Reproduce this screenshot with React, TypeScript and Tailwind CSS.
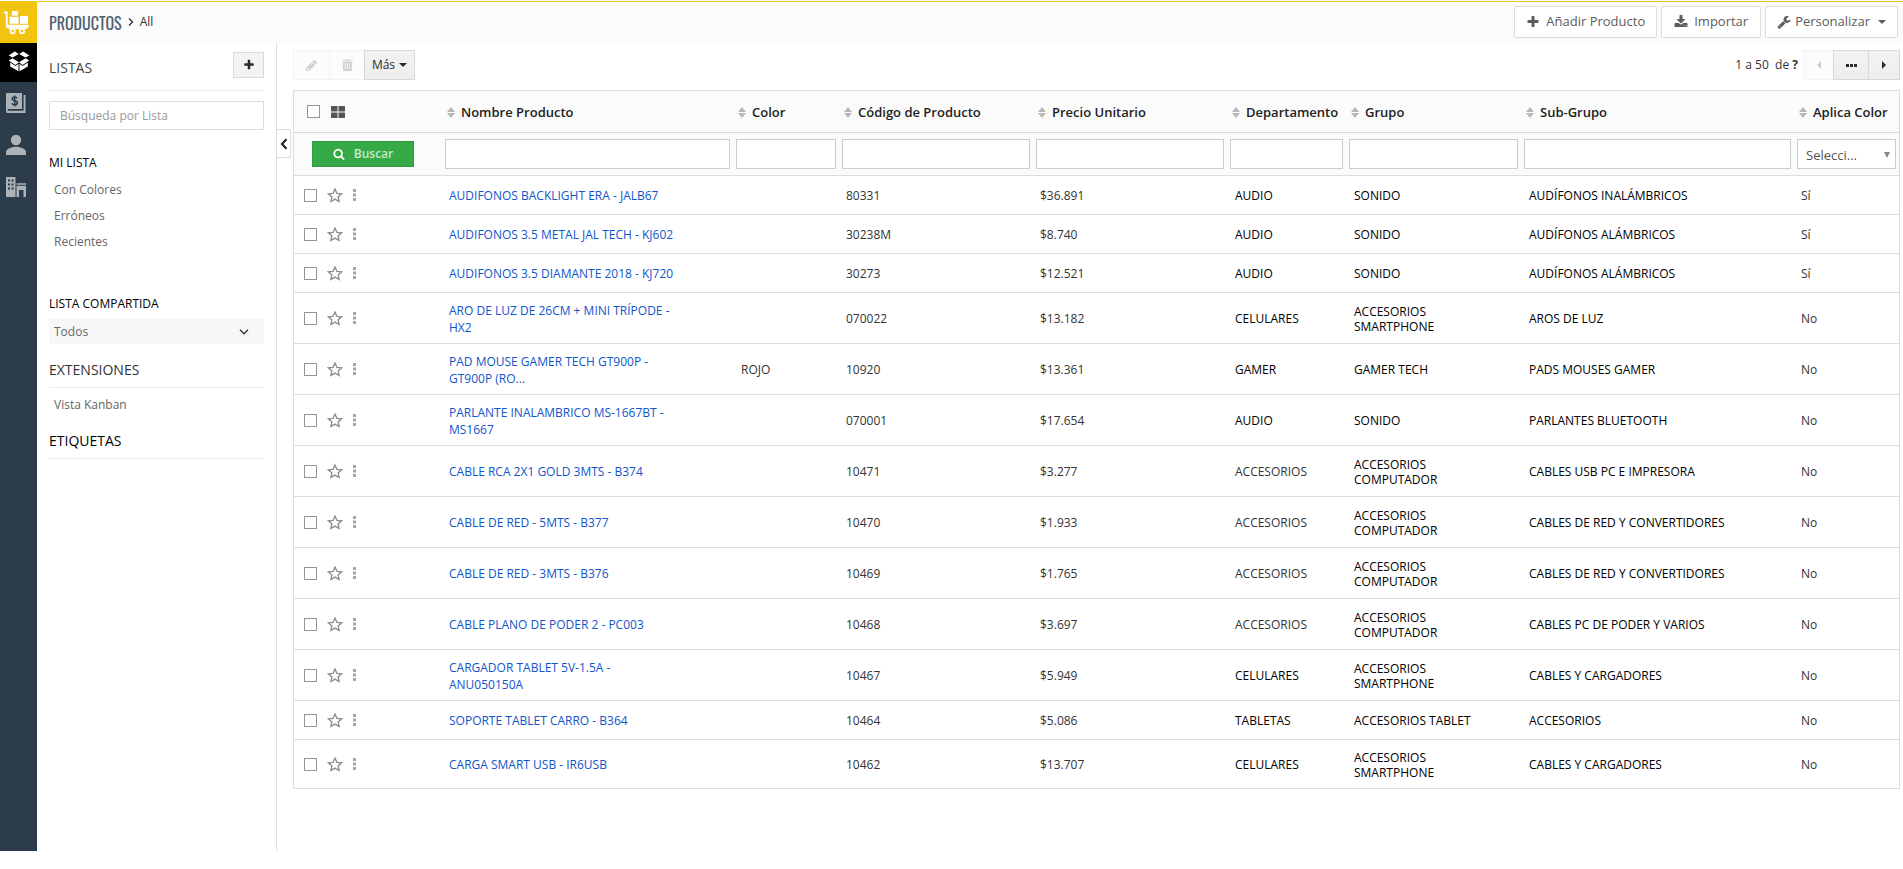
import React from "react";

type Product = {
  name: string;
  color?: string;
  code: string;
  price: string;
  dept: string;
  group: string;
  sub: string;
  applies: string;
  size: "single" | "double" | "last";
};

const products: Product[] = [
  { name: "AUDIFONOS BACKLIGHT ERA - JALB67", code: "80331", price: "$36.891", dept: "AUDIO", group: "SONIDO", sub: "AUDÍFONOS INALÁMBRICOS", applies: "Sí", size: "single" },
  { name: "AUDIFONOS 3.5 METAL JAL TECH - KJ602", code: "30238M", price: "$8.740", dept: "AUDIO", group: "SONIDO", sub: "AUDÍFONOS ALÁMBRICOS", applies: "Sí", size: "single" },
  { name: "AUDIFONOS 3.5 DIAMANTE 2018 - KJ720", code: "30273", price: "$12.521", dept: "AUDIO", group: "SONIDO", sub: "AUDÍFONOS ALÁMBRICOS", applies: "Sí", size: "single" },
  { name: "ARO DE LUZ DE 26CM + MINI TRÍPODE - HX2", code: "070022", price: "$13.182", dept: "CELULARES", group: "ACCESORIOS SMARTPHONE", sub: "AROS DE LUZ", applies: "No", size: "double" },
  { name: "PAD MOUSE GAMER TECH GT900P - GT900P (RO...", color: "ROJO", code: "10920", price: "$13.361", dept: "GAMER", group: "GAMER TECH", sub: "PADS MOUSES GAMER", applies: "No", size: "double" },
  { name: "PARLANTE INALAMBRICO MS-1667BT - MS1667", code: "070001", price: "$17.654", dept: "AUDIO", group: "SONIDO", sub: "PARLANTES BLUETOOTH", applies: "No", size: "double" },
  { name: "CABLE RCA 2X1 GOLD 3MTS - B374", code: "10471", price: "$3.277", dept: "ACCESORIOS", group: "ACCESORIOS COMPUTADOR", sub: "CABLES USB PC E IMPRESORA", applies: "No", size: "double" },
  { name: "CABLE DE RED - 5MTS - B377", code: "10470", price: "$1.933", dept: "ACCESORIOS", group: "ACCESORIOS COMPUTADOR", sub: "CABLES DE RED Y CONVERTIDORES", applies: "No", size: "double" },
  { name: "CABLE DE RED - 3MTS - B376", code: "10469", price: "$1.765", dept: "ACCESORIOS", group: "ACCESORIOS COMPUTADOR", sub: "CABLES DE RED Y CONVERTIDORES", applies: "No", size: "double" },
  { name: "CABLE PLANO DE PODER 2 - PC003", code: "10468", price: "$3.697", dept: "ACCESORIOS", group: "ACCESORIOS COMPUTADOR", sub: "CABLES PC DE PODER Y VARIOS", applies: "No", size: "double" },
  { name: "CARGADOR TABLET 5V-1.5A - ANU050150A", code: "10467", price: "$5.949", dept: "CELULARES", group: "ACCESORIOS SMARTPHONE", sub: "CABLES Y CARGADORES", applies: "No", size: "double" },
  { name: "SOPORTE TABLET CARRO - B364", code: "10464", price: "$5.086", dept: "TABLETAS", group: "ACCESORIOS TABLET", sub: "ACCESORIOS", applies: "No", size: "single" },
  { name: "CARGA SMART USB - IR6USB", code: "10462", price: "$13.707", dept: "CELULARES", group: "ACCESORIOS SMARTPHONE", sub: "CABLES Y CARGADORES", applies: "No", size: "last" },
];

const rowHeight = { single: "h-[39px]", double: "h-[51px]", last: "h-[49px]" };

const columns = ["Nombre Producto", "Color", "Código de Producto", "Precio Unitario", "Departamento", "Grupo", "Sub-Grupo", "Aplica Color"];

const paths = {
  plus: "M1600 736v192q0 40-28 68t-68 28h-416v416q0 40-28 68t-68 28h-192q-40 0-68-28t-28-68v-416h-416q-40 0-68-28t-28-68v-192q0-40 28-68t68-28h416v-416q0-40 28-68t68-28h192q40 0 68 28t28 68v416h416q40 0 68 28t28 68z",
  download: "M1344 1344q0-26-19-45t-45-19-45 19-19 45 19 45 45 19 45-19 19-45zm256 0q0-26-19-45t-45-19-45 19-19 45 19 45 45 19 45-19 19-45zm128-224v320q0 40-28 68t-68 28h-1472q-40 0-68-28t-28-68v-320q0-40 28-68t68-28h465l135 136q58 56 136 56t136-56l136-136h464q40 0 68 28t28 68zm-325-569q17 41-14 70l-448 448q-18 19-45 19t-45-19l-448-448q-31-29-14-70 17-39 59-39h256v-448q0-26 19-45t45-19h256q26 0 45 19t19 45v448h256q42 0 59 39z",
  wrench: "M448 1472q0-26-19-45t-45-19-45 19-19 45 19 45 45 19 45-19 19-45zm644-420l-682 682q-37 37-90 37-52 0-91-37l-106-108q-38-36-38-90 0-53 38-91l681-681q39 98 114.5 173.5t173.5 114.5zm634-435q0 39-23 106-47 134-164.5 217.5t-258.5 83.5q-185 0-316.5-131.5t-131.5-316.5 131.5-316.5 316.5-131.5q58 0 121.5 16.5t107.5 46.5q16 11 16 28t-16 28l-293 169v224l193 107q5-3 79-48.5t135.5-81 70.5-35.5q15 0 23.5 10t8.5 25z",
  search: "M1216 832q0-185-131.5-316.5t-316.5-131.5-316.5 131.5-131.5 316.5 131.5 316.5 316.5 131.5 316.5-131.5 131.5-316.5zm512 832q0 52-38 90t-90 38q-54 0-90-38l-343-342q-179 124-399 124-143 0-273.5-55.5t-225-150-150-225-55.5-273.5 55.5-273.5 150-225 225-150 273.5-55.5 273.5 55.5 225 150 150 225 55.5 273.5q0 220-124 399l343 343q37 37 37 90z",
  pencil: "M491 1536l91-91-235-235-91 91v107h128v128h107zm523-928q0-22-22-22-10 0-17 7l-542 542q-7 7-7 17 0 22 22 22 10 0 17-7l542-542q7-7 7-17zm-54-192l416 416-832 832h-416v-416zm683 96q0 53-37 90l-166 166-416-416 166-165q36-38 90-38 53 0 91 38l235 234q37 39 37 91z",
};

function Glyph({ name, className }: { name: keyof typeof paths; className: string }) {
  return (
    <svg viewBox="0 0 1792 1792" fill="currentColor" className={className} aria-hidden="true">
      <path d={paths[name]} />
    </svg>
  );
}

function Caret() {
  return (
    <svg viewBox="0 0 8 4" width="8" height="4" fill="currentColor" aria-hidden="true">
      <path d="M0 0h8L4 4z" />
    </svg>
  );
}

function SortIcon() {
  return (
    <svg viewBox="0 0 8 11" width="8" height="11" fill="#b8b8b8" className="shrink-0" aria-hidden="true">
      <path d="M0 5 4 0l4 5zM0 6h8l-4 5z" />
    </svg>
  );
}

function TrashIcon() {
  return (
    <svg viewBox="0 0 11 12" width="11" height="12" className="shrink-0" aria-hidden="true">
      <path fill="currentColor" fillRule="evenodd" d="M3.2 1.6 4 0h3l.8 1.6H11v1H0v-1zM4.2 1.6h2.6L6.5.9h-2zM1 3h9v8q0 1-1 1H2q-1 0-1-1zM2.7 4.3v6h.9v-6zM5 4.3v6h.9v-6zM7.4 4.3v6h.9v-6z" />
    </svg>
  );
}

function Star() {
  return (
    <svg viewBox="0 0 16 16" width="16" height="16" fill="none" stroke="#8b8b8b" strokeWidth="1.3" strokeLinejoin="miter" aria-hidden="true">
      <path d="M8 2l1.9 4.3 4.7.5-3.5 3.1 1 4.6L8 12.1l-4.1 2.4 1-4.6-3.500-3.100 4.700-.5z" />
    </svg>
  );
}

function TrolleyIcon() {
  return (
    <svg viewBox="0 0 26 26" width="26" height="26" fill="#fff" aria-hidden="true">
      <path d="M0 1.6h3.6v13.2H24.6v3H1.8V3.6H0z" />
      <rect x="7.8" y="1" width="6.2" height="4.6" />
      <rect x="5.6" y="6.8" width="9" height="7" />
      <rect x="16" y="6" width="8" height="7.8" />
      <path d="M4.5 17.6h18v1.6h-18z" />
      <g fill="#f1c40f" stroke="#fff" strokeWidth="1.7">
        <circle cx="8.6" cy="21.2" r="2.2" />
        <circle cx="18" cy="21.2" r="2.2" />
      </g>
    </svg>
  );
}

function BoxIcon() {
  return (
    <svg viewBox="0 0 22 21" width="22" height="21" fill="#fff" aria-hidden="true">
      <path d="M0.6 4.4 6.8 0.6 10.8 3 4.6 6.6z" />
      <path d="M21.4 4.4 15.2 0.6 11.2 3l6.2 3.6z" />
      <path d="M4.4 7.2 11 11.2l-3.6 2.7L0.8 9.6z" />
      <path d="M17.6 7.2 11 11.2l3.6 2.7 6.6-4.3z" />
      <path d="M2.2 11.6l5.2 3.4 3.1-2.2v7.4L2.2 15.6z" />
      <path d="M19.8 11.6 14.6 15l-3.1-2.2v7.4l8.3-4.6z" />
    </svg>
  );
}

function DollarBookIcon() {
  return (
    <svg viewBox="0 0 22 22" width="22" height="22" aria-hidden="true">
      <path fill="#abb2b8" d="M2 1h15v16H3.4q-.9 0-.9.9 0 .9.9.9H18.6V3H20.5V21H2.5Q1 21 1 19V2q0-1 1-1z" />
      <path fill="none" stroke="#2c3b49" strokeWidth="1.5" d="M12.2 6.2Q11.500 5 9.700 5 7.200 5 7.200 6.800 7.200 8.300 9.600 8.700 12.300 9.100 12.300 10.900 12.300 12.700 9.700 12.700 7.400 12.700 6.900 11.300M9.700 3.500V14.200" />
    </svg>
  );
}

function PersonIcon() {
  return (
    <svg viewBox="0 0 22 22" width="22" height="22" fill="#abb2b8" aria-hidden="true">
      <circle cx="11" cy="6" r="5.200" />
      <path d="M1 21v-2.500c0-3.500 5-5.700 10-5.700s10 2.200 10 5.700V21z" />
    </svg>
  );
}

function BuildingIcon() {
  return (
    <svg viewBox="0 0 22 22" width="22" height="22" fill="#abb2b8" aria-hidden="true">
      <path fillRule="evenodd" d="M1 1h9.500v20H1zM3 3.500V5.500h2V3.500zM6.500 3.500V5.500h2V3.500zM3 7.500V9.500h2V7.500zM6.500 7.500V9.500h2V7.500zM3 11.500V13.500h2V11.500zM6.500 11.500V13.500h2V11.500z" />
      <path d="M11.500 7.200h9.500v1.600h-9.500zM11.500 9.800h9.500V21h-2.500v-7h-4.500v7h-2.500z" />
    </svg>
  );
}

function Checkbox({ label }: { label: string }) {
  return <input type="checkbox" aria-label={label} className="size-[13px] shrink-0 appearance-none border border-[#959595] bg-white" />;
}

const topButton = "flex h-8 items-center rounded-xs border border-[#dcdcdc] bg-white text-[13px] text-[#5c5c5c]";
const greyButton = "flex h-[30px] items-center justify-center border border-[#d8d8d8] bg-linear-to-b from-[#f2f2f2] to-[#eeeeee] text-[#2b2b2b]";
const navItem = "flex h-[42px] items-center justify-center pr-[5px]";
const listLink = "block px-[5px] text-xs leading-[26px] text-[#666]";
const sectionTitle = "text-sm leading-5";

function SidePanel() {
  return (
    <aside className="w-[240px] shrink-0 border-r border-[#dcdcdc] px-3">
      <div className="flex h-12 items-center justify-between border-b border-[#ebebeb] pb-[3px]">
        <h2 className={`${sectionTitle} pt-[5px] text-[#444]`}>LISTAS</h2>
        <button type="button" aria-label="Añadir lista" className="flex h-[26px] w-[31px] items-center justify-center border border-[#dadada] bg-[#f3f3f3] text-[#2b2b2b]">
          <Glyph name="plus" className="size-3" />
        </button>
      </div>
      <input aria-label="Búsqueda por Lista" placeholder="Búsqueda por Lista" className="mt-[10px] h-[29px] w-full border border-[#dcdcdc] px-[10px] text-xs placeholder:text-[#999]" />
      <h3 className="mt-[23px] text-xs leading-5 text-black">MI LISTA</h3>
      <nav className="mt-1">
        <a href="#colores" className={listLink}>Con Colores</a>
        <a href="#erroneos" className={listLink}>Erróneos</a>
        <a href="#recientes" className={listLink}>Recientes</a>
      </nav>
      <h3 className="mt-[39px] text-xs leading-5 text-black">LISTA COMPARTIDA</h3>
      <button type="button" className="mt-[5px] flex h-[25px] w-full items-center justify-between bg-[#f7f7f7] pl-[5px] pr-[15px] text-xs text-[#666]">
        Todos
        <svg viewBox="0 0 10 6" width="10" height="6" fill="none" stroke="#333" strokeWidth="1.4" aria-hidden="true"><path d="M1 .8l4 4 4-4" /></svg>
      </button>
      <h2 className={`${sectionTitle} mt-4 border-b border-[#ebebeb] pb-[7px] text-[#333]`}>EXTENSIONES</h2>
      <a href="#kanban" className={`${listLink} mt-1`}>Vista Kanban</a>
      <h2 className={`${sectionTitle} mt-[13px] border-b border-[#ebebeb] pb-[7px] text-black`}>ETIQUETAS</h2>
    </aside>
  );
}

function ProductTable() {
  return (
    <table className="w-full table-fixed border-separate border-spacing-0 border-l border-r border-t border-[#dcdcdc] text-xs text-[#333]">
      <colgroup>
        <col className="w-[148px]" />
        <col />
        <col className="w-[106px]" />
        <col className="w-[194px]" />
        <col className="w-[194px]" />
        <col className="w-[119px]" />
        <col className="w-[175px]" />
        <col className="w-[273px]" />
        <col className="w-[105px]" />
      </colgroup>
      <thead className="bg-[#fbfbfb]">
        <tr className="h-[42px]">
          <th className="border-b border-[#dcdcdc] p-0 pl-[13px]">
            <div className="flex items-center gap-[11px]">
              <Checkbox label="Seleccionar todo" />
              <svg viewBox="0 0 14 12" width="14" height="12" fill="#555" aria-hidden="true">
                <path d="M0 0h6.500v5.500H0zM7.500 0H14v5.500H7.500zM0 6.500h6.500V12H0zM7.500 6.500H14V12H7.500z" />
              </svg>
            </div>
          </th>
          {columns.map((c) => (
            <th key={c} scope="col" className="border-b border-[#dcdcdc] p-0 pl-[5px] pt-[3px] text-left text-[13px] font-semibold text-[#222]">
              <div className="flex items-center gap-[6px] whitespace-nowrap">
                <SortIcon />
                {c}
              </div>
            </th>
          ))}
        </tr>
        <tr className="h-[43px]">
          <td className="border-b border-[#dcdcdc] p-0 pl-[18px]">
            <button type="button" className="flex h-[26px] w-[102px] items-center justify-center gap-[9px] border border-[#2f9a41] bg-[#35aa47] font-semibold text-[#c6ebcc]">
              <Glyph name="search" className="size-3 text-white" />
              Buscar
            </button>
          </td>
          {columns.slice(0, 7).map((c) => (
            <td key={c} className="border-b border-[#dcdcdc] px-[3px] py-0">
              <input aria-label={`Filtrar por ${c}`} className="block h-[30px] w-full border border-[#ccc] bg-white px-2" />
            </td>
          ))}
          <td className="border-b border-[#dcdcdc] px-[3px] py-0">
            <div className="relative">
              <select aria-label="Filtrar por Aplica Color" className="block h-[30px] w-full appearance-none border border-[#ccc] bg-white pl-2 pt-[3px] text-[13px] text-[#555]">
                <option>Selecci...</option>
              </select>
              <svg viewBox="0 0 6 6" width="6" height="6" fill="#888" className="pointer-events-none absolute right-[6px] top-[13px]" aria-hidden="true"><path d="M0 0h6L3 6z" /></svg>
            </div>
          </td>
        </tr>
      </thead>
      <tbody>
        {products.map((p) => (
          <tr key={p.code} className={`${rowHeight[p.size]} [&>td]:border-b [&>td]:border-[#dcdcdc] [&>td]:pb-0 [&>td]:pr-0`}>
            <td className="pl-[10px]">
              <div className="flex items-center gap-[10px]">
                <Checkbox label={`Seleccionar ${p.name}`} />
                <button type="button" aria-label="Favorito"><Star /></button>
                <button type="button" aria-label="Acciones">
                  <svg viewBox="0 0 3 12" width="3" height="12" fill="#a5a5a5" aria-hidden="true"><path d="M0 0h3v3H0zM0 4.500h3v3H0zM0 9h3v3H0z" /></svg>
                </button>
              </div>
            </td>
            <td className="pl-[7px] pt-px">
              <a href={`#${p.code}`} className="block max-w-[230px] leading-[17px] text-[#1155cc]">{p.name}</a>
            </td>
            <td className="pl-2 pt-[2px]">{p.color}</td>
            <td className="pl-[7px] pt-[2px]">{p.code}</td>
            <td className="pl-[7px] pt-[2px]">{p.price}</td>
            <td className={p.dept === "ACCESORIOS" ? "pl-2 pt-px text-[#333]" : "pl-2 pt-px text-black"}>{p.dept}</td>
            <td className="pl-2 pt-px text-black">
              <div className="max-w-[140px] leading-[15px]">{p.group}</div>
            </td>
            <td className="pl-2 pt-px text-black">{p.sub}</td>
            <td className="pl-[7px] pt-[2px]">{p.applies}</td>
          </tr>
        ))}
      </tbody>
    </table>
  );
}

export default function App() {
  return (
    <div className="bg-white pt-px font-['Open_Sans',sans-serif]">
      <div className="flex min-h-[calc(100vh-19px)] border-t border-[#f1c40f]">
        <nav className="w-[37px] shrink-0 bg-[#2c3b49]" aria-label="Módulos">
          <a href="#inventario" aria-label="Inventario" className="flex h-[41px] items-center justify-center bg-[#f1c40f] pr-[3px]"><TrolleyIcon /></a>
          <a href="#productos" aria-label="Productos" className="flex h-[39px] items-center justify-center bg-black pb-[3px]"><BoxIcon /></a>
          <a href="#precios" aria-label="Precios" className={navItem}><DollarBookIcon /></a>
          <a href="#contactos" aria-label="Contactos" className={navItem}><PersonIcon /></a>
          <a href="#organizaciones" aria-label="Organizaciones" className={navItem}><BuildingIcon /></a>
        </nav>
        <div className="flex min-w-0 flex-1 flex-col">
          <header className="flex h-[41px] justify-between bg-[#fbfbfb] pl-3 pr-[5px] pt-1">
            <div className="flex h-8 items-center gap-[6px]">
              <h1 className="pt-px font-[Oswald,'Open_Sans',sans-serif] text-base text-[#4f6070]">PRODUCTOS</h1>
              <svg viewBox="0 0 6 8" width="6" height="8" fill="none" stroke="#333" strokeWidth="1.400" aria-hidden="true"><path d="M1 .6l3.500 3.400L1 7.400" /></svg>
              <a href="#all" className="text-xs text-[#333]">All</a>
            </div>
            <div className="flex gap-1">
              <button type="button" className={`${topButton} gap-[6px] px-[11px]`}><Glyph name="plus" className="size-[14px]" />Añadir Producto</button>
              <button type="button" className={`${topButton} gap-[6px] px-3`}><Glyph name="download" className="size-[14px]" />Importar</button>
              <button type="button" className={`${topButton} gap-1 px-[11px]`}><Glyph name="wrench" className="size-[14px]" />Personalizar<span className="pl-1"><Caret /></span></button>
            </div>
          </header>
          <div className="flex flex-1">
            <SidePanel />
            <div className="relative min-w-0 flex-1 pl-4 pr-[3px] pt-[7px]">
              <button type="button" aria-label="Ocultar panel" className="absolute left-0 top-[86px] flex h-[29px] w-[14px] items-center justify-center border border-l-0 border-[#dcdcdc] bg-white">
                <svg viewBox="0 0 8 12" width="8" height="12" fill="none" stroke="#222" strokeWidth="2.200" aria-hidden="true"><path d="M6.500 1.200 2 6l4.500 4.800" /></svg>
              </button>
              <div className="mb-[10px] flex items-center justify-between">
                <div className="flex">
                  <button type="button" aria-label="Editar" disabled className="flex h-[30px] w-9 items-center justify-center border border-r-0 border-[#f3f3f3] bg-[#fcfcfc] text-[#d0d0d0]"><Glyph name="pencil" className="size-[13px]" /></button>
                  <button type="button" aria-label="Eliminar" disabled className="flex h-[30px] w-[35px] items-center justify-center border border-r-0 border-[#f3f3f3] bg-[#fcfcfc] text-[#d0d0d0]"><TrashIcon /></button>
                  <button type="button" className={`${greyButton} w-[51px] gap-1 text-xs`}>Más<Caret /></button>
                </div>
                <div className="flex items-center">
                  <span className="whitespace-pre pr-[5px] text-xs text-[#333]">1 a 50  de <b>?</b></span>
                  <button type="button" aria-label="Anterior" disabled className="flex h-[30px] w-[30px] items-center justify-center border border-r-0 border-[#f3f3f3] bg-[#fcfcfc] text-[#ccc]">
                    <svg viewBox="0 0 4 8" width="4" height="8" fill="currentColor" aria-hidden="true"><path d="M4 0v8L0 4z" /></svg>
                  </button>
                  <button type="button" aria-label="Ir a página" className={`${greyButton} w-9`}>
                    <svg viewBox="0 0 11 3" width="11" height="3" fill="currentColor" aria-hidden="true"><path d="M0 0h3v3H0zM4 0h3v3H4zM8 0h3v3H8z" /></svg>
                  </button>
                  <button type="button" aria-label="Siguiente" className={`${greyButton} w-[31px] border-l-0`}>
                    <svg viewBox="0 0 4 8" width="4" height="8" fill="currentColor" aria-hidden="true"><path d="M0 0v8l4-4z" /></svg>
                  </button>
                </div>
              </div>
              <ProductTable />
            </div>
          </div>
        </div>
      </div>
    </div>
  );
}
